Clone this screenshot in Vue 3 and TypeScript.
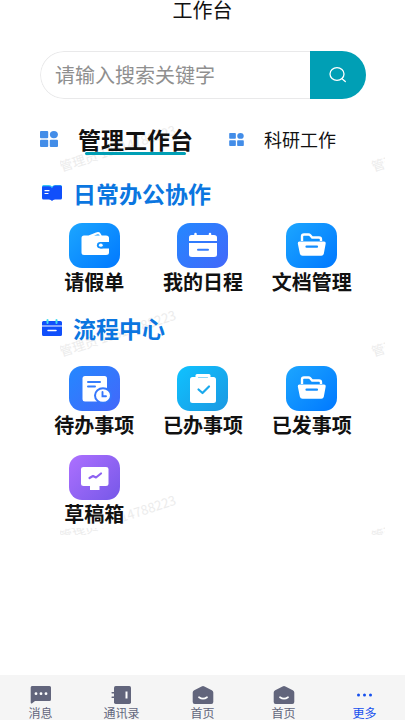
<script setup lang="ts">
import { ref } from 'vue'

type IconName = 'wallet' | 'calendar' | 'folder' | 'todo' | 'done' | 'board'
interface Entry { label: string; icon: IconName; tone: string }
interface Section { title: string; icon: 'book' | 'date'; entries: Entry[] }

const keyword = ref('')
const activeTab = ref(0)
const tabs = ['管理工作台', '科研工作']

const sections: Section[] = [
  {
    title: '日常办公协作',
    icon: 'book',
    entries: [
      { label: '请假单', icon: 'wallet', tone: 'azure' },
      { label: '我的日程', icon: 'calendar', tone: 'indigo' },
      { label: '文档管理', icon: 'folder', tone: 'azure' },
    ],
  },
  {
    title: '流程中心',
    icon: 'date',
    entries: [
      { label: '待办事项', icon: 'todo', tone: 'indigo' },
      { label: '已办事项', icon: 'done', tone: 'cyan' },
      { label: '已发事项', icon: 'folder', tone: 'azure' },
      { label: '草稿箱', icon: 'board', tone: 'violet' },
    ],
  },
]

const navItems = [
  { label: '消息', icon: 'chat' },
  { label: '通讯录', icon: 'contacts' },
  { label: '首页', icon: 'home' },
  { label: '首页', icon: 'home' },
  { label: '更多', icon: 'more' },
]
const activeNav = ref(4)
</script>

<template>
  <div class="page">
    <header class="title-bar"><h1>工作台</h1></header>

    <main class="content">
      <div class="watermarks" aria-hidden="true">
        <span v-for="n in 6" :key="n" class="watermark">管理员 18614788223</span>
      </div>

      <form class="search" role="search" @submit.prevent>
        <input v-model="keyword" type="text" placeholder="请输入搜索关键字" aria-label="请输入搜索关键字" />
        <button type="submit" aria-label="搜索">
          <svg width="20" height="18" viewBox="0 0 20 18" fill="none" stroke="#fff" stroke-width="1.3" stroke-linecap="round">
            <ellipse cx="9" cy="8" rx="7" ry="6.4" />
            <path d="M14 12.7 17.3 15.6" />
          </svg>
        </button>
      </form>

      <nav class="tabs">
        <button
          v-for="(tab, i) in tabs"
          :key="tab"
          type="button"
          class="tab"
          :class="{ active: i === activeTab }"
          @click="activeTab = i"
        >
          <svg class="tab-icon" viewBox="0 0 18 16" fill="#438de8">
            <rect x="0" y="0" width="8.2" height="7.2" rx="1" />
            <ellipse cx="13.9" cy="3.6" rx="4" ry="3.6" />
            <rect x="0" y="8.8" width="8.2" height="7.2" rx="1" />
            <rect x="9.8" y="8.8" width="8.2" height="7.2" rx="1" />
          </svg>
          <span class="tab-text">{{ tab }}</span>
        </button>
      </nav>

      <section v-for="section in sections" :key="section.title" class="section">
        <h2>
          <svg v-if="section.icon === 'book'" width="20" height="18" viewBox="0 0 20 18">
            <path d="M0 2.5Q0 1 1.5 1H7q2 0 3 1.500Q11 1 13 1h5.500Q20 1 20 2.500V6H0Z" fill="#35c8f5" />
            <path d="M0 3.500Q0 2.300 1.500 2.300H7q2 0 3 2 1-2.800 3-2.800h5.500q1.500 0 1.500 1.500V14q0 1.500-1.500 1.500H13q-2 0-3 1.500-1-1.500-3-1.500H1.500Q0 15.500 0 14Z" fill="#104ffb" />
            <path d="M3 6.700h4M3 9.500h3" stroke="#fff" stroke-width="1.200" stroke-linecap="round" />
          </svg>
          <svg v-else width="20" height="18" viewBox="0 0 20 18">
            <path d="M1.500 2h17Q20 2 20 3.500V6.500H0V3.500Q0 2 1.500 2ZM0 7.500H20V15.500Q20 17 18.500 17H1.500Q0 17 0 15.500Z" fill="#104ffb" />
            <path d="M5.500 1v3M14.500 1v3" stroke="#43dcee" stroke-width="2" stroke-linecap="round" />
            <path d="M6 11.500h8" stroke="#fff" stroke-width="1.500" stroke-linecap="round" />
          </svg>
          <span>{{ section.title }}</span>
        </h2>
        <div class="grid">
          <a v-for="entry in section.entries" :key="entry.label" href="#" class="entry" @click.prevent>
            <span class="tile" :class="entry.tone">
              <svg v-if="entry.icon === 'wallet'" width="51" height="45" viewBox="0 0 51 45">
                <path d="M15 12.500h4.500l7.500-3q3-1.300 4.500 1l1.200 2H37q3 0 3 2.500v4h-8a3.900 3.300 0 0 0 0 6.400h8v4q0 2.500-3 2.500H15q-2.500 0-2.500-2.500V15q0-2.500 2.500-2.500Z" fill="#fff" />
                <path d="M25 12.600 28 11.400q1.500-.5 2.200.4l.6.8Z" fill="#179cff" />
                <ellipse cx="31.800" cy="22.200" rx="3.900" ry="3.300" fill="#1391ff" />
                <ellipse cx="31.800" cy="22.200" rx="1.900" ry="1.600" fill="#fff" />
              </svg>
              <svg v-else-if="entry.icon === 'calendar'" width="51" height="45" viewBox="0 0 51 45">
                <path d="M14.500 12H37q3 0 3 2.500V18H12v-3.500q0-2.500 2.500-2.500ZM12 20H40V31.500Q40 34 37 34H15q-3 0-3-2.500Z" fill="#fff" />
                <path d="M18.500 11v3M33 11v3" stroke="#fff" stroke-width="2.500" stroke-linecap="round" />
                <path d="M21 26.800H31" stroke="#367dfd" stroke-width="2" stroke-linecap="round" />
              </svg>
              <svg v-else-if="entry.icon === 'folder'" width="51" height="45" viewBox="0 0 51 45">
                <path d="M16 18V13.500Q16 11.500 18 11.500h4.500q1 0 1.700.8l2 2.200H33q2 0 2 2V18" fill="none" stroke="#fff" stroke-width="2.400" />
                <path d="M13.500 18.500h24.500q2 0 1.700 2l-1.900 10.300q-.4 2-2.500 2H16.500q-2.200 0-2.600-2L11.800 20.500q-.3-2 1.700-2Z" fill="#fff" />
                <path d="M20.500 23.700H31" stroke="#148eff" stroke-width="2.200" stroke-linecap="round" />
              </svg>
              <svg v-else-if="entry.icon === 'todo'" width="51" height="45" viewBox="0 0 51 45">
                <rect x="13.500" y="10" width="24.500" height="25.500" rx="2.500" fill="#fff" />
                <path d="M19 16h12M19 20.500h7" stroke="#347dfd" stroke-width="2" stroke-linecap="round" />
                <ellipse cx="34" cy="29.500" rx="9" ry="8.200" fill="#3577fd" />
                <ellipse cx="34" cy="29.500" rx="7" ry="6.300" fill="#fff" />
                <path d="M33.500 26v4.200H37" fill="none" stroke="#3577fd" stroke-width="1.900" stroke-linecap="round" />
              </svg>
              <svg v-else-if="entry.icon === 'done'" width="51" height="45" viewBox="0 0 51 45">
                <rect x="13" y="11" width="26" height="26" rx="2.500" fill="#fff" />
                <rect x="18.500" y="8" width="15" height="5" rx="1.500" fill="#fff" />
                <path d="M21.500 11.500h9" stroke="#8fd7f7" stroke-width="1.200" stroke-linecap="round" />
                <path d="m21.500 23.500 4 3.500 6.500-6.500" fill="none" stroke="#19a9ed" stroke-width="2.200" stroke-linecap="round" stroke-linejoin="round" />
              </svg>
              <svg v-else width="51" height="45" viewBox="0 0 51 45">
                <path d="M14.500 12H37q2.500 0 2.500 2V29q0 2-2.500 2h-6.500v4H21v-4h-6.500q-2.500 0-2.500-2V14q0-2 2.500-2Z" fill="#fff" />
                <path d="m20.500 23 3.500-2 3 1.500 5-4" fill="none" stroke="#8d62f1" stroke-width="2.200" stroke-linecap="round" stroke-linejoin="round" />
              </svg>
            </span>
            <span class="entry-label">{{ entry.label }}</span>
          </a>
        </div>
      </section>
    </main>

    <nav class="bottom-nav">
      <button
        v-for="(item, i) in navItems"
        :key="i"
        type="button"
        :class="{ active: i === activeNav }"
        @click="activeNav = i"
      >
        <svg v-if="item.icon === 'chat'" width="22" height="18" viewBox="0 0 22 18">
          <path d="M2 0H19.500Q21 0 21 1.500V13.500Q21 15 19.500 15H5L2.200 17.300Q.7 18 .7 16.500V1.500Q.7 0 2 0Z" fill="currentColor" />
          <g fill="#fff"><circle cx="6" cy="7.700" r="1.400" /><circle cx="11" cy="7.700" r="1.400" /><circle cx="16" cy="7.700" r="1.400" /></g>
        </svg>
        <svg v-else-if="item.icon === 'contacts'" width="22" height="18" viewBox="0 0 22 18">
          <rect x="3" y="0" width="17" height="18" rx="1.700" fill="currentColor" />
          <path d="M1.200 6.800h3.500M1.200 11.300h3.500" stroke="currentColor" stroke-width="1.600" stroke-linecap="round" />
          <path d="M15.500 5.500v7" stroke="#fff" stroke-width="2" />
        </svg>
        <svg v-else-if="item.icon === 'home'" width="22" height="18" viewBox="0 0 22 18">
          <path d="M9.600.5q1.400-.8 2.800 0l7.400 3.700Q21.300 5 21.300 6.500V16q0 2-2 2H2.700q-2 0-2-2V6.500Q.7 5 2.200 4.200Z" fill="currentColor" />
          <path d="M7 11.200q4 3 8 0" fill="none" stroke="#fff" stroke-width="1.700" stroke-linecap="round" />
        </svg>
        <svg v-else width="22" height="18" viewBox="0 0 22 18" fill="currentColor">
          <circle cx="4.500" cy="9" r="1.500" /><circle cx="10.500" cy="9" r="1.500" /><circle cx="16.500" cy="9" r="1.500" />
        </svg>
        <span>{{ item.label }}</span>
      </button>
    </nav>
  </div>
</template>

<style>
body {
  background: #fff;
}
</style>

<style scoped>
.page {
  display: flex;
  flex-direction: column;
  min-height: 100vh;
  color: #111;
  font-family: "Noto Sans CJK SC", sans-serif;
}
.title-bar {
  text-align: center;
}
h1 {
  margin: 0;
  font-size: 20px;
  font-weight: 400;
  line-height: 19px;
}
button {
  padding: 0;
  border: 0;
  background: none;
  color: inherit;
  font: inherit;
  cursor: pointer;
}
svg {
  display: block;
  flex: none;
}
.content {
  position: relative;
  z-index: 0;
  flex: 1;
  padding: 32px 39px 0 40px;
}
.watermarks {
  position: absolute;
  z-index: -1;
  top: 91px;
  right: 20px;
  left: 60px;
  display: grid;
  grid-template-columns: 312px 312px;
  grid-auto-rows: 185px;
  height: 425px;
  overflow: hidden;
}
.watermark {
  padding-top: 48px;
  color: #ececec;
  font-size: 13px;
  line-height: 18px;
  white-space: nowrap;
  transform: rotate(-18deg);
  transform-origin: 0 57px;
}
.search {
  display: flex;
  height: 48px;
  border-radius: 24px;
  overflow: hidden;
}
.search input {
  flex: 1;
  min-width: 0;
  box-sizing: border-box;
  padding: 0 14px;
  border: 1px solid #e9e9ea;
  border-right: 0;
  border-radius: 24px 0 0 24px;
  outline: 0;
  background: #fff;
  color: #333;
  font: 20px/24px "Noto Sans CJK SC", sans-serif;
}
.search input::placeholder {
  color: #8f8f8f;
  opacity: 1;
}
.search button {
  display: grid;
  place-items: center;
  width: 56px;
  background: #009fb5;
}
.tabs {
  display: flex;
  gap: 36px;
  margin-top: 24px;
}
.tab {
  display: flex;
  align-items: center;
  gap: 20px;
  height: 32px;
  font-size: 18px;
  line-height: 28px;
}
.tab-icon {
  width: 15px;
  height: 13px;
}
.tab-text {
  position: relative;
}
.tab.active {
  font-size: 23px;
  font-weight: 700;
}
.tab.active .tab-icon {
  width: 18px;
  height: 16px;
}
.tab.active .tab-text::after {
  position: absolute;
  right: 7px;
  bottom: -2px;
  left: 7px;
  height: 3px;
  border-radius: 2px;
  background: #009fb5;
  content: "";
}
.section {
  padding-top: 22px;
}
.section + .section {
  padding-top: 16px;
}
h2 {
  display: flex;
  align-items: center;
  gap: 11px;
  margin: 0;
  padding-left: 2px;
  color: #0b76e0;
  font-size: 23px;
  font-weight: 700;
  line-height: 32px;
}
.grid {
  display: grid;
  grid-template-columns: repeat(3, 1fr);
  row-gap: 16px;
  margin-top: 14px;
}
.section + .section .grid {
  margin-top: 22px;
}
.entry {
  display: flex;
  flex-direction: column;
  align-items: center;
  color: #111;
  text-decoration: none;
}
.entry-label {
  background: #fff;
  font-size: 20px;
  font-weight: 700;
  line-height: 28px;
  white-space: nowrap;
}
.tile {
  width: 51px;
  height: 45px;
  border-radius: 13px;
}
.azure {
  background: linear-gradient(135deg, #1ca6ff, #0078ff);
}
.indigo {
  background: linear-gradient(135deg, #2488ff, #4367fa);
}
.cyan {
  background: linear-gradient(135deg, #0fc2ff, #1b98e2);
}
.violet {
  background: linear-gradient(135deg, #ad70ff, #7658e8);
}
.bottom-nav {
  display: flex;
  height: 45px;
  background: #f5f5f5;
}
.bottom-nav button {
  display: flex;
  flex: 1;
  flex-direction: column;
  align-items: center;
  padding-top: 11px;
  color: #62657c;
  font-size: 12px;
  line-height: 18px;
}
.bottom-nav button.active {
  color: #1550ee;
}
</style>
